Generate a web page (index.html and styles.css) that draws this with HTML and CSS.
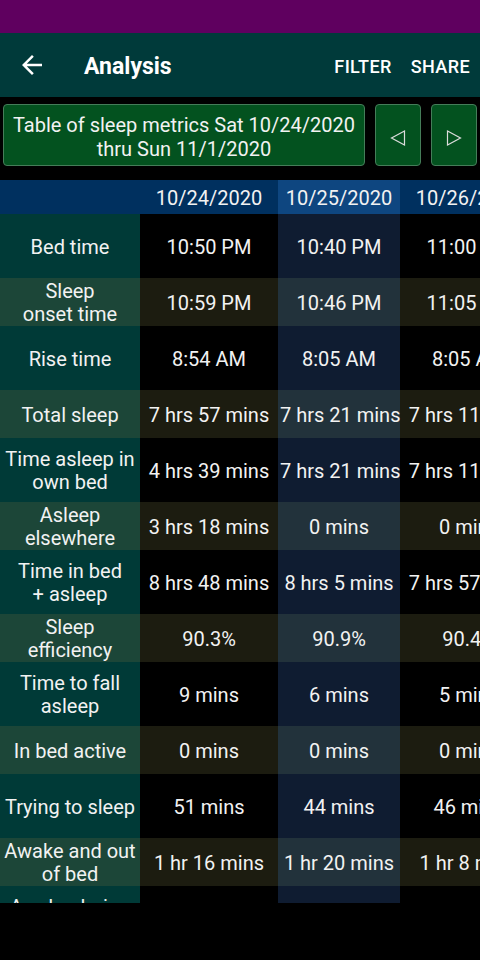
FILE: index.html
```html
<!DOCTYPE html>
<html lang="en">
<head>
  <meta charset="UTF-8" />
  <meta name="viewport" content="width=device-width, initial-scale=1.0" />
  <title>Analysis</title>
  <link rel="stylesheet" href="styles.css">
</head>
<body>
  <!-- Status bar strip -->
  <div class="status-bar"></div>

  <!-- Top app bar -->
  <header class="app-bar">
    <button class="icon-button" aria-label="Back">
      <svg width="30" height="30" viewBox="0 0 24 24"><path fill="currentColor" d="M20 11H7.83l5.59-5.59L12 4l-8 8 8 8 1.41-1.41L7.83 13H20v-2z"/></svg>
    </button>
    <h1 class="title">Analysis</h1>
    <button class="text-button">FILTER</button>
    <button class="text-button">SHARE</button>
  </header>

  <!-- Date range with previous / next -->
  <div class="range-row">
    <div class="range-card">Table of sleep metrics Sat 10/24/2020 thru Sun 11/1/2020</div>
    <button class="nav-button" aria-label="Previous">
      <svg width="16" height="16" viewBox="0 0 16 16"><polygon points="14.5,1 1.5,8 14.5,15" fill="none" stroke="currentColor" stroke-width="1.2"/></svg>
    </button>
    <button class="nav-button" aria-label="Next">
      <svg width="16" height="16" viewBox="0 0 16 16"><polygon points="1.5,1 14.5,8 1.5,15" fill="none" stroke="currentColor" stroke-width="1.2"/></svg>
    </button>
  </div>

  <div class="table-wrap">
    <table class="metrics">
      <colgroup>
        <col class="col-label">
        <col class="col-a">
        <col class="col-b">
        <col class="col-a">
        <col class="col-a">
      </colgroup>
      <thead>
        <tr class="head">
          <th class="label"></th>
          <th>10/24/2020</th>
          <th class="current">10/25/2020</th>
          <th>10/26/2020</th>
          <th>10/27/2020</th>
        </tr>
      </thead>
      <tbody>
        <tr class="tall">
          <td class="label">Bed time</td>
          <td>10:50 PM</td><td class="current">10:40 PM</td><td>11:00 PM</td><td>10:55 PM</td>
        </tr>
        <tr class="short">
          <td class="label">Sleep<br>onset time</td>
          <td>10:59 PM</td><td class="current">10:46 PM</td><td>11:05 PM</td><td>11:02 PM</td>
        </tr>
        <tr class="tall">
          <td class="label">Rise time</td>
          <td>8:54 AM</td><td class="current">8:05 AM</td><td>8:05 AM</td><td>7:40 AM</td>
        </tr>
        <tr class="short">
          <td class="label">Total sleep</td>
          <td>7 hrs 57 mins</td><td class="current">7 hrs 21 mins</td><td>7 hrs 11 mins</td><td>7 hrs 2 mins</td>
        </tr>
        <tr class="tall">
          <td class="label">Time asleep in<br>own bed</td>
          <td>4 hrs 39 mins</td><td class="current">7 hrs 21 mins</td><td>7 hrs 11 mins</td><td>7 hrs 2 mins</td>
        </tr>
        <tr class="short">
          <td class="label">Asleep<br>elsewhere</td>
          <td>3 hrs 18 mins</td><td class="current">0 mins</td><td>0 mins</td><td>0 mins</td>
        </tr>
        <tr class="tall">
          <td class="label">Time in bed<br>+ asleep</td>
          <td>8 hrs 48 mins</td><td class="current">8 hrs 5 mins</td><td>7 hrs 57 mins</td><td>7 hrs 45 mins</td>
        </tr>
        <tr class="short">
          <td class="label">Sleep<br>efficiency</td>
          <td>90.3%</td><td class="current">90.9%</td><td>90.4%</td><td>90.8%</td>
        </tr>
        <tr class="tall">
          <td class="label">Time to fall<br>asleep</td>
          <td>9 mins</td><td class="current">6 mins</td><td>5 mins</td><td>7 mins</td>
        </tr>
        <tr class="short">
          <td class="label">In bed active</td>
          <td>0 mins</td><td class="current">0 mins</td><td>0 mins</td><td>0 mins</td>
        </tr>
        <tr class="tall">
          <td class="label">Trying to sleep</td>
          <td>51 mins</td><td class="current">44 mins</td><td>46 mins</td><td>43 mins</td>
        </tr>
        <tr class="short">
          <td class="label">Awake and out<br>of bed</td>
          <td>1 hr 16 mins</td><td class="current">1 hr 20 mins</td><td>1 hr 8 mins</td><td>1 hr 2 mins</td>
        </tr>
        <tr class="tall">
          <td class="label">Awake during<br>sleep</td>
          <td>0 mins</td><td class="current">0 mins</td><td>0 mins</td><td>0 mins</td>
        </tr>
      </tbody>
    </table>
  </div>
</body>
</html>
```

FILE: styles.css
```css
body {
  font-family: Roboto, "Noto Sans", sans-serif;
  background-color: #000;
  color: #f2f2f2;
  margin: 0;
  width: 480px;
  height: 960px;
  overflow: hidden;
}
button {
  font-family: inherit;
  background: none;
  border: none;
  color: inherit;
  padding: 0;
  cursor: pointer;
}
.status-bar {
  height: 33px;
  background-color: #5f005f;
}
.app-bar {
  height: 64px;
  background-color: #003a3a;
  display: flex;
  align-items: center;
  padding: 0 10px 0 17px;
}
.icon-button {
  display: flex;
  color: #fff;
}
.title {
  font-size: 23px;
  font-weight: 700;
  margin: 2px 0 0 37px;
  flex: 1;
  color: #fff;
}
.text-button {
  font-size: 18px;
  font-weight: 500;
  letter-spacing: 0.4px;
  color: #fff;
  margin: 2px 0 0 19px;
}
.range-row {
  display: flex;
  gap: 10px;
  padding: 7px 3px 14px;
}
.range-card, .nav-button {
  height: 62px;
  box-sizing: border-box;
  background-color: #03521f;
  border: 1px solid #457d59;
  border-radius: 4px;
}
.range-card {
  width: 362px;
  font-size: 20px;
  line-height: 24px;
  text-align: center;
  display: flex;
  align-items: center;
  justify-content: center;
  padding: 3px 6px 0;
}
.nav-button {
  width: 46px;
  display: flex;
  align-items: center;
  justify-content: center;
  padding-top: 6px;
  color: #dcdcdc;
}
.table-wrap {
  height: 723px;
  overflow: hidden;
}
.metrics {
  border-collapse: collapse;
  table-layout: fixed;
  width: 676px;
  font-size: 20px;
  line-height: 23px;
}
.col-label { width: 140px; }
.col-a { width: 138px; }
.col-b { width: 122px; }
.metrics th, .metrics td {
  padding: 2px 2px 0;
  text-align: center;
  white-space: nowrap;
}
.head { height: 34px; }
.tall { height: 64px; }
.short { height: 48px; }
.metrics th {
  font-weight: 400;
  background-color: #00305f;
}
.metrics th.current { background-color: #0e4680; }
.tall td.label { background-color: #003a37; }
.short td.label { background-color: #1c4638; }
.tall td.current { background-color: #0f1c31; }
.short td { background-color: #1c1c10; }
.short td.current { background-color: #22323b; }
```
